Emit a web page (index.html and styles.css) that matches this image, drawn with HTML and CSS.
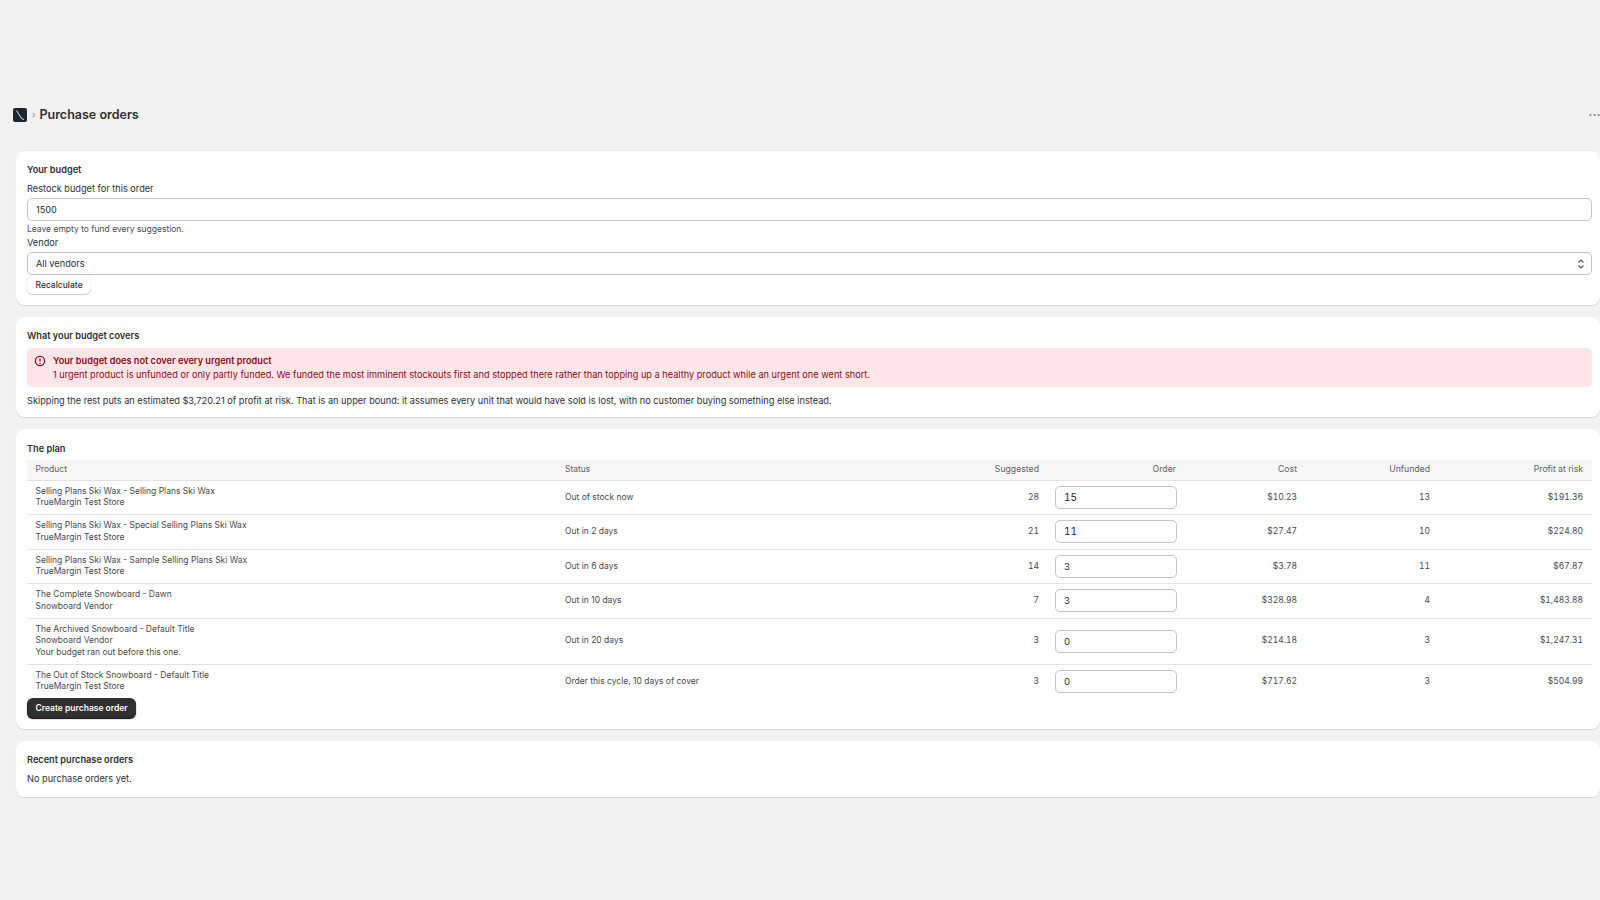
FILE: index.html
```html
<!DOCTYPE html>
<html>

<head>
    <title>Purchase orders</title>
    <link rel="stylesheet" href="styles.css">
</head>

<body>
    <div class="topbar"></div>
    <main class="page">
        <header class="titlebar">
            <div class="crumbs">
                <svg class="logo" viewBox="0 0 14 14">
                    <rect width="14" height="14" rx="2" fill="#1c2430"></rect>
                    <path d="M3.5 2.5 L8.5 10.5 L11 11.5" fill="none" stroke="#e8ecef" stroke-width="1"></path>
                </svg>
                <span class="sep">›</span>
                <h1>Purchase orders</h1>
            </div>
            <div class="more">···</div>
        </header>

        <section class="card">
            <h2>Your budget</h2>
            <label class="field-label">Restock budget for this order</label>
            <div class="input wide">1500</div>
            <div class="help">Leave empty to fund every suggestion.</div>
            <label class="field-label vendor-label">Vendor</label>
            <div class="input wide select">
                <span>All vendors</span>
                <svg class="updown" viewBox="0 0 8 12">
                    <path d="M1.5 4.5 L4 2 L6.5 4.5 M1.5 7.5 L4 10 L6.5 7.5" fill="none" stroke="#555" stroke-width="1.1"></path>
                </svg>
            </div>
            <button class="btn recalc">Recalculate</button>
        </section>

        <section class="card covers">
            <h2 class="covers-title">What your budget covers</h2>
            <div class="banner">
                <svg class="alert" viewBox="0 0 12 12">
                    <circle cx="6" cy="6" r="4.6" fill="none" stroke="#8e0b21" stroke-width="1.3"></circle>
                    <path d="M6 3.4 V6.4 M6 7.8 V8.8" fill="none" stroke="#8e0b21" stroke-width="1.3"></path>
                </svg>
                <div>
                    <div class="banner-title">Your budget does not cover every urgent product</div>
                    <div>1 urgent product is unfunded or only partly funded. We funded the most imminent stockouts first and stopped there rather than topping up a healthy product while an urgent one went short.</div>
                </div>
            </div>
            <p class="note">Skipping the rest puts an estimated $3,720.21 of profit at risk. That is an upper bound: it assumes every unit that would have sold is lost, with no customer buying something else instead.</p>
        </section>

        <section class="card plan">
            <h2 class="plan-title">The plan</h2>
            <table>
                <colgroup>
                    <col class="c-product">
                    <col class="c-status">
                    <col class="c-suggested">
                    <col class="c-order">
                    <col class="c-cost">
                    <col class="c-unfunded">
                    <col class="c-profit">
                </colgroup>
                <thead>
                    <tr>
                        <th>Product</th>
                        <th>Status</th>
                        <th class="num">Suggested</th>
                        <th class="num">Order</th>
                        <th class="num">Cost</th>
                        <th class="num">Unfunded</th>
                        <th class="num">Profit at risk</th>
                    </tr>
                </thead>
                <tbody>
                    <tr>
                        <td>Selling Plans Ski Wax - Selling Plans Ski Wax<br>TrueMargin Test Store</td>
                        <td>Out of stock now</td>
                        <td class="num">28</td>
                        <td class="num"><div class="input qty strong">15</div></td>
                        <td class="num">$10.23</td>
                        <td class="num">13</td>
                        <td class="num">$191.36</td>
                    </tr>
                    <tr>
                        <td>Selling Plans Ski Wax - Special Selling Plans Ski Wax<br>TrueMargin Test Store</td>
                        <td>Out in 2 days</td>
                        <td class="num">21</td>
                        <td class="num"><div class="input qty strong">11</div></td>
                        <td class="num">$27.47</td>
                        <td class="num">10</td>
                        <td class="num">$224.80</td>
                    </tr>
                    <tr>
                        <td>Selling Plans Ski Wax - Sample Selling Plans Ski Wax<br>TrueMargin Test Store</td>
                        <td>Out in 6 days</td>
                        <td class="num">14</td>
                        <td class="num"><div class="input qty">3</div></td>
                        <td class="num">$3.78</td>
                        <td class="num">11</td>
                        <td class="num">$67.87</td>
                    </tr>
                    <tr>
                        <td>The Complete Snowboard - Dawn<br>Snowboard Vendor</td>
                        <td>Out in 10 days</td>
                        <td class="num">7</td>
                        <td class="num"><div class="input qty">3</div></td>
                        <td class="num">$328.98</td>
                        <td class="num">4</td>
                        <td class="num">$1,483.88</td>
                    </tr>
                    <tr>
                        <td>The Archived Snowboard - Default Title<br>Snowboard Vendor<br>Your budget ran out before this one.</td>
                        <td>Out in 20 days</td>
                        <td class="num">3</td>
                        <td class="num"><div class="input qty">0</div></td>
                        <td class="num">$214.18</td>
                        <td class="num">3</td>
                        <td class="num">$1,247.31</td>
                    </tr>
                    <tr class="last">
                        <td>The Out of Stock Snowboard - Default Title<br>TrueMargin Test Store</td>
                        <td>Order this cycle, 10 days of cover</td>
                        <td class="num">3</td>
                        <td class="num"><div class="input qty">0</div></td>
                        <td class="num">$717.62</td>
                        <td class="num">3</td>
                        <td class="num">$504.99</td>
                    </tr>
                </tbody>
            </table>
            <button class="btn primary">Create purchase order</button>
        </section>

        <section class="card recent">
            <h2>Recent purchase orders</h2>
            <p class="empty">No purchase orders yet.</p>
        </section>
    </main>
</body>

</html>
```

FILE: styles.css
```css
* {
    box-sizing: border-box;
}

body {
    margin: 0;
    height: 900px;
    overflow: hidden;
    background: #f1f2f4;
    color: #303030;
    font-family: Inter, "Liberation Sans", sans-serif;
    font-size: 9.2px;
    line-height: 12px;
}

.topbar {
    height: 98px;
}

.page {
    padding-left: 16px;
    padding-bottom: 7px;
    background: #f1f1f1;
}

.titlebar {
    display: flex;
    justify-content: space-between;
    align-items: center;
    height: 53px;
    padding-bottom: 19px;
}

.crumbs {
    display: flex;
    align-items: center;
    margin-left: -3px;
}

.logo {
    width: 14px;
    height: 14px;
}

.sep {
    margin: 0 4px 0 5px;
    color: #8a8a8a;
    font-size: 9px;
}

h1 {
    margin: 0;
    font-size: 12.5px;
    font-weight: 600;
    color: #303030;
}

.more {
    margin-right: -1px;
    color: #666;
    font-size: 11px;
    font-weight: 700;
    letter-spacing: 0.5px;
}

.card {
    margin-bottom: 12px;
    padding: 13px 8px 10px 11px;
    background: #fff;
    border-radius: 8px;
    box-shadow: 0 1px 0 #d6d6d6, 0 0 1px #e0e0e0;
}

.card:last-child {
    margin-bottom: 0;
}

h2 {
    margin: 0 0 7px;
    font-size: 9.2px;
    line-height: 12px;
    font-weight: 600;
    color: #303030;
}

.field-label {
    display: block;
    height: 12px;
}

.vendor-label {
    margin-top: 2px;
}

.input {
    background: #fdfdfd;
    border: 1px solid #c4c4c4;
    border-radius: 5px;
    color: #303030;
}

.wide {
    height: 23px;
    margin-top: 3px;
    padding: 0 8px;
    line-height: 21px;
}

.select {
    display: flex;
    justify-content: space-between;
    align-items: center;
    padding-right: 6px;
}

.updown {
    width: 8px;
    height: 12px;
}

.help {
    height: 11px;
    margin-top: 3px;
    color: #4a4a4a;
    font-size: 8.5px;
    line-height: 11px;
}

.btn {
    display: block;
    height: 20px;
    padding: 0 8.5px;
    border: none;
    border-radius: 6px;
    background: #fff;
    box-shadow: 0 1px 1px #c9c9c9, 0 0 1px #d0d0d0;
    color: #303030;
    font-family: inherit;
    font-size: 8.5px;
    font-weight: 500;
}

.recalc {
    height: 19px;
    margin-bottom: 1px;
}

.primary {
    background: #303030;
    color: #fff;
    font-weight: 600;
    box-shadow: 0 1px 1px #000;
}

.covers-title {
    margin-bottom: 6px;
}

.banner {
    display: flex;
    gap: 7px;
    padding: 7px 7px 6px;
    background: #fee5e7;
    border-radius: 5px;
    color: #8e0b21;
}

.alert {
    flex: none;
    width: 12px;
    height: 12px;
}

.banner-title {
    margin-bottom: 2px;
    font-weight: 600;
}

.note {
    margin: 8px 0 0;
}

.plan {
    padding-bottom: 11px;
}

.plan-title {
    margin: 1px 0 5px;
}

table {
    width: 100%;
    border-collapse: collapse;
    table-layout: fixed;
    font-size: 8.5px;
    line-height: 11.5px;
}

.c-product {
    width: 530px;
}

.c-status {
    width: 393px;
}

.c-suggested {
    width: 97px;
}

.c-order {
    width: 137px;
}

.c-cost {
    width: 121px;
}

.c-unfunded {
    width: 133px;
}

.c-profit {
    width: 154px;
}

th {
    height: 20px;
    padding: 0 8px;
    background: #f7f7f7;
    border-bottom: 1px solid #e3e3e3;
    color: #616161;
    font-weight: 400;
    text-align: left;
}

td {
    padding: 5.25px 8px;
    border-bottom: 1px solid #e3e3e3;
    color: #4a4a4a;
}

th:first-child,
td:first-child {
    padding-left: 8.5px;
}

th:last-child,
td:last-child {
    padding-right: 9px;
}

.last td {
    border-bottom: none;
}

th.num,
td.num {
    text-align: right;
    font-variant-numeric: tabular-nums;
}

th.num {
    font-size: 8.7px;
}

.qty {
    width: 122px;
    height: 23px;
    margin-left: auto;
    margin-right: -1px;
    padding: 0 8px;
    font-size: 9.5px;
    line-height: 21px;
    text-align: left;
}

.strong {
    color: #222;
    font-size: 10px;
}

.recent {
    padding-bottom: 12px;
}

.empty {
    margin: 0;
}
```
